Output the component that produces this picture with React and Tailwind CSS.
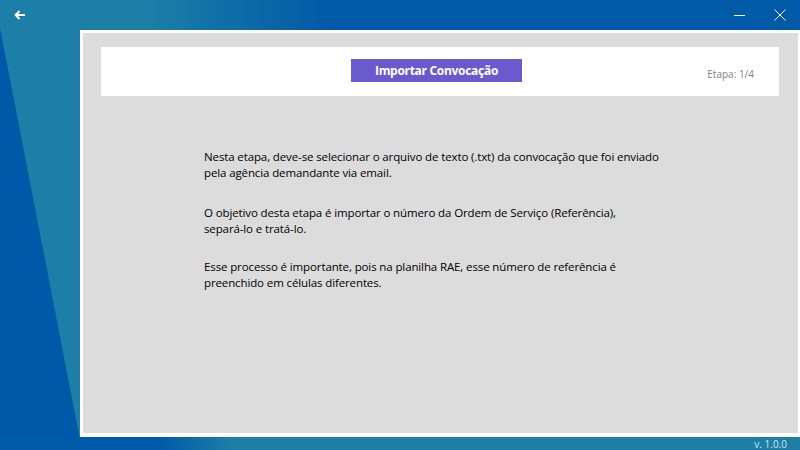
export default function App() {
  return (
    <div
      className="relative w-[800px] h-[450px] overflow-hidden bg-[#1d7ea7] flex flex-col"
      style={{ fontFamily: "'Open Sans', 'Noto Sans', sans-serif" }}
    >
      {/* dark blue wedge on the left */}
      <svg className="absolute inset-0" width="800" height="450" viewBox="0 0 800 450">
        <polygon points="0,28 82,450 0,450" fill="#0059a8" />
      </svg>

      <div className="relative h-[30px] shrink-0 flex items-center bg-[linear-gradient(to_right,#1d7ea7_0px,#1d7ea7_150px,#005aa8_330px,#005aa8_800px)]">
        <svg className="ml-[14px]" width="12" height="10" viewBox="0 0 12 10">
          <path d="M5.5 1 L1.5 5 L5.5 9 M1.5 5 H11" stroke="#fff" strokeWidth="1.8" fill="none" />
        </svg>
        <div className="ml-auto flex items-center">
          <svg width="11" height="11" viewBox="0 0 11 11" className="mr-[29px]">
            <path d="M0 5.5 H11" stroke="#fff" strokeWidth="1" />
          </svg>
          <svg width="12" height="12" viewBox="0 0 12 12" className="mr-[14px]">
            <path d="M0.5 0.5 L11.5 11.5 M11.5 0.5 L0.5 11.5" stroke="#fff" strokeWidth="1" />
          </svg>
        </div>
      </div>

      <div className="relative flex-1 min-h-0 pl-[80px]">
        <div className="h-full bg-[#dcdcdc] border-l-[3px] border-t-[3px] border-r-2 border-b-[4px] border-white pt-[14px] pl-[18px] pr-[19px]">
          <div className="relative h-[49px] bg-white flex items-start justify-center pt-[12px]">
            <div className="ml-[-7px] w-[171px] h-[23px] bg-[#6a5acd] text-white text-[12px] font-bold tracking-[-0.3px] flex items-center justify-center leading-none">
              Importar Convocação
            </div>
            <span className="absolute right-[25px] top-[22px] text-[10px] text-[#808080] leading-none">
              Etapa: 1/4
            </span>
          </div>

          <div className="ml-[103px] mt-[53px] text-[11.5px] leading-[16px] tracking-[-0.12px] text-black">
            <p>
              Nesta etapa, deve-se selecionar o arquivo de texto (.txt) da convocação que foi enviado
              <br />
              pela agência demandante via email.
            </p>
            <p className="mt-[24px]">
              O objetivo desta etapa é importar o número da Ordem de Serviço (Referência),
              <br />
              separá-lo e tratá-lo.
            </p>
            <p className="mt-[22px]">
              Esse processo é importante, pois na planilha RAE, esse número de referência é
              <br />
              preenchido em células diferentes.
            </p>
          </div>
        </div>
      </div>

      <div className="relative h-[13px] shrink-0 flex items-center justify-end pr-[13px] bg-[linear-gradient(to_right,#005aa8_0px,#005aa8_158px,#1d7ea7_230px,#1d7ea7_800px)]">
        <span className="text-[10px] leading-none text-[#d8e4ee]">v. 1.0.0</span>
      </div>
    </div>
  );
}
